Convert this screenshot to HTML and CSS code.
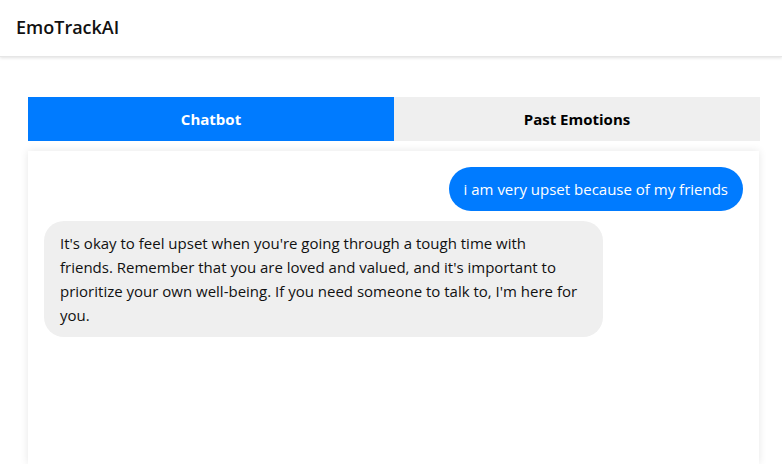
FILE: index.html
```html
<!DOCTYPE html>
<html lang="en">
<head>
<meta charset="utf-8">
<title>EmoTrackAI</title>
<link rel="stylesheet" href="styles.css">
</head>
<body>
<header class="topbar">
  <div class="brand">EmoTrackAI</div>
</header>
<main class="main">
  <nav class="tabs">
    <button class="tab tab-active">Chatbot</button>
    <button class="tab">Past Emotions</button>
  </nav>
  <section class="chat">
    <div class="msg msg-user">i am very upset because of my friends</div>
    <div class="msg msg-bot">It's okay to feel upset when you're going through a tough time with friends. Remember that you are loved and valued, and it's important to prioritize your own well-being. If you need someone to talk to, I'm here for you.</div>
  </section>
</main>
</body>
</html>
```
FILE: styles.css
```css
* { box-sizing: border-box; }
html, body { margin: 0; padding: 0; background: #fff; }
body {
  font-family: "Open Sans", "Noto Sans", sans-serif;
  color: #111;
  overflow: hidden;
  height: 464px;
}
.topbar {
  height: 57px;
  display: flex;
  align-items: center;
  padding-left: 16px;
  box-shadow: 0 1px 3px rgba(0,0,0,0.12);
  border-bottom: 1px solid #e6e6e6;
}
.brand {
  font-size: 18px;
  font-weight: 600;
  color: #111;
  margin-top: -3px;
}
.main {
  padding: 40px 22px 0 28px;
}
.tabs {
  display: flex;
  height: 44px;
}
.tab {
  flex: 1;
  border: none;
  background: #efefef;
  color: #000;
  font-family: inherit;
  font-size: 15px;
  font-weight: 700;
  cursor: pointer;
}
.tab-active {
  background: #007bff;
  color: #fff;
}
.chat {
  margin-top: 10px;
  margin-right: 1px;
  background: #fff;
  box-shadow: 0 0 8px rgba(0,0,0,0.1);
  padding: 16px;
  height: 313px;
  display: flex;
  flex-direction: column;
  gap: 10px;
}
.msg {
  font-size: 15px;
  line-height: 24px;
  padding: 10px 16px;
  border-radius: 22px;
  max-width: 80%;
}
.msg-user {
  align-self: flex-end;
  background: #007bff;
  color: #fff;
  padding: 10px 15px;
}
.msg-bot {
  align-self: flex-start;
  background: #efefef;
  color: #111;
  border-radius: 20px;
  padding-right: 22px;
}
```
